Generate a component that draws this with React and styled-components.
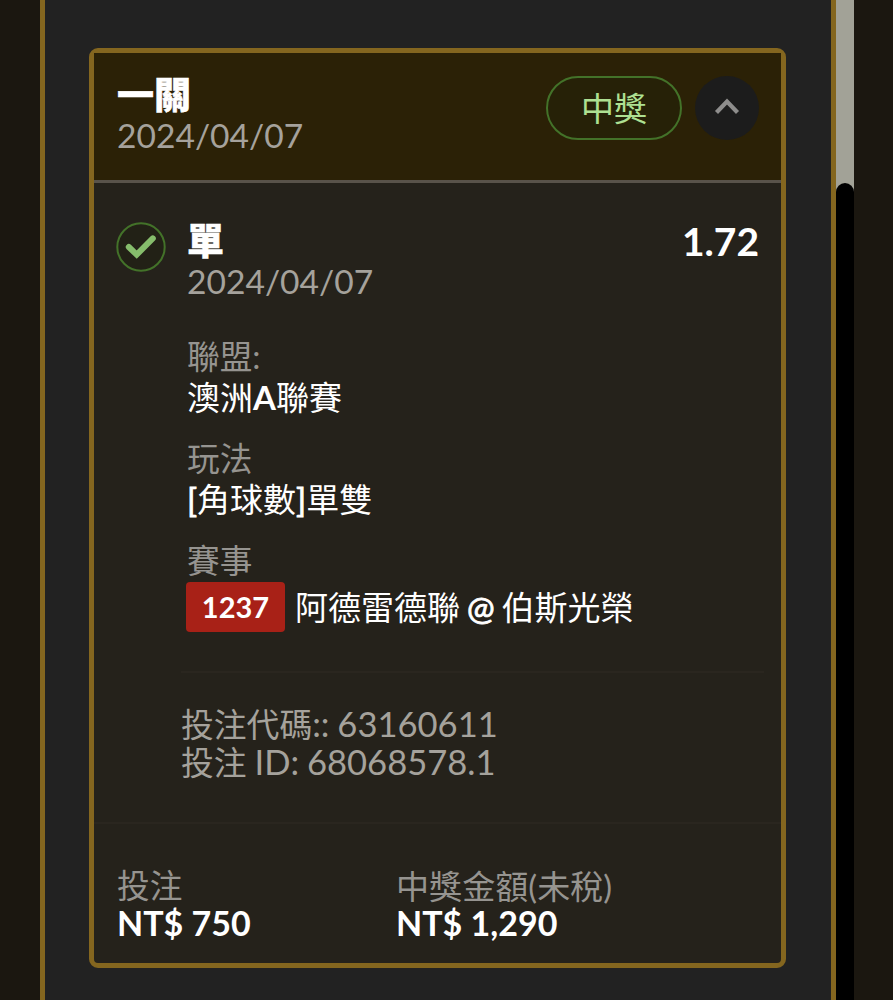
import React from 'react';
import styled, { createGlobalStyle } from 'styled-components';

const COLORS = {
  page: '#1b1710',
  sheet: '#222222',
  card: '#25221b',
  header: '#2b2106',
  gold: '#84661f',
  muted: '#a5a29c',
  label: '#969490',
  text: '#ffffff',
  green: '#437229',
  red: '#a82117',
};

const GlobalStyle = createGlobalStyle`
  * {
    box-sizing: border-box;
  }

  body {
    margin: 0;
    background: ${COLORS.page};
    font-family: Lato, 'Noto Sans CJK TC', sans-serif;
    overflow: hidden;
  }
`;

const Page = styled.div`
  display: flex;
  width: 893px;
  height: 1000px;
  padding-left: 40px;
  background: ${COLORS.page};
`;

const Sheet = styled.main`
  width: 796px;
  height: 1000px;
  padding: 48px 45px 0;
  border: solid ${COLORS.gold};
  border-width: 0 5px;
  background: ${COLORS.sheet};
`;

const ScrollTrack = styled.div`
  width: 18px;
  height: 1000px;
  padding-top: 183px;
  background: linear-gradient(#a2a297 192px, #000 192px);
`;

const ScrollThumb = styled.div`
  height: 817px;
  border-radius: 9px 9px 0 0;
  background: #000;
`;

const Card = styled.article`
  width: 697px;
  height: 920px;
  margin-left: -1px;
  border: 5px solid ${COLORS.gold};
  border-radius: 9px;
  background: ${COLORS.card};
`;

const CardHeader = styled.header`
  display: flex;
  height: 130px;
  padding: 23px 22px 0 23px;
  border-bottom: 3px solid #59534a;
  background: ${COLORS.header};
`;

const Heading = styled.div`
  flex: 1;
`;

const Title = styled.h2`
  margin: 0;
  height: 39px;
  line-height: 37px;
  font-size: 37px;
  font-weight: 900;
  -webkit-text-stroke: 0.5px ${COLORS.text};
  color: ${COLORS.text};
`;

const DateText = styled.p`
  margin: 0;
  height: 41px;
  line-height: 41px;
  font-size: 33.6px;
  color: ${COLORS.muted};
`;

const Status = styled.div`
  width: 136px;
  height: 64px;
  border: 2px solid ${COLORS.green};
  border-radius: 32px;
  line-height: 60px;
  text-align: center;
  font-size: 33px;
  color: #aee092;
  background: #262107;
`;

const Toggle = styled.button`
  display: flex;
  width: 64px;
  height: 64px;
  margin-left: 13px;
  padding: 0;
  border: 0;
  border-radius: 50%;
  background: #1c1c1c;
`;

const Bet = styled.section`
  display: flex;
  height: 641px;
  padding: 39px 22px 0;
  border-bottom: 2px solid #2a261f;
`;

const BetBody = styled.div`
  flex: 1;
  margin-left: 21px;
`;

const BetTop = styled.div`
  display: flex;
  justify-content: space-between;
  margin-bottom: 34px;
`;

const Odds = styled.div`
  line-height: 39px;
  font-size: 39px;
  font-weight: 700;
  color: ${COLORS.text};
`;

const Field = styled.div`
  height: 102px;
`;

const Label = styled.div`
  height: ${p => p.height || 41}px;
  line-height: ${p => p.height || 41}px;
  font-size: ${p => p.size || 32.7}px;
  color: ${COLORS.label};
`;

const Value = styled.div`
  height: 41px;
  line-height: 41px;
  white-space: pre;
  font-size: 33px;
  color: ${COLORS.text};
`;

const Strong = styled.span`
  font-weight: 700;
`;

const Bracket = styled.span`
  -webkit-text-stroke: 0.8px ${COLORS.text};
`;

const At = styled(Bracket)`
  margin: 0 -1.5px;
`;

const Match = styled(Value)`
  display: flex;
  align-items: center;
  height: 50px;
  margin-top: 1px;
  line-height: 50px;
`;

const Tag = styled.span`
  width: 99px;
  height: 50px;
  margin: 0 10px 0 -1px;
  border-radius: 4px;
  text-align: center;
  font-size: 29px;
  font-weight: 700;
  background: ${COLORS.red};
`;

const Codes = styled.div`
  margin: 39px -5px 0 -6px;
  padding-top: 32px;
  border-top: 2px solid #2a261f;
`;

const Code = styled.div`
  height: 38px;
  line-height: 38px;
  white-space: pre;
  font-size: 34.6px;
  word-spacing: -1px;
  color: ${COLORS.muted};
`;

const CodeName = styled.span`
  font-size: 32.8px;
`;

const Footer = styled.footer`
  display: flex;
  padding: 43px 22px 0 23px;
`;

const Total = styled.div`
  width: 279px;
`;

const Amount = styled.div`
  height: 38px;
  line-height: 36px;
  font-size: 34px;
  font-weight: 700;
  color: ${COLORS.text};
`;

const ChevronUp = () => (
  <svg width="64" height="64" viewBox="0 0 64 64" fill="none">
    <path d="M21.5 36.5 32 25.5 42.5 36.5" stroke="#8e8d8c" strokeWidth="4.2" />
  </svg>
);

const CheckMark = () => (
  <svg width="50" height="50" viewBox="0 0 50 50" fill="none">
    <circle cx="25" cy="25" r="23.7" fill="#222116" stroke={COLORS.green} strokeWidth="2" />
    <path
      d="M12.8 25 20.7 32.6 36.8 16.4"
      stroke="#86bd6c"
      strokeWidth="6"
      strokeLinecap="round"
    />
  </svg>
);

const App = () => (
  <>
    <GlobalStyle />
    <Page>
      <Sheet>
        <Card>
          <CardHeader>
            <Heading>
              <Title>一關</Title>
              <DateText>2024/04/07</DateText>
            </Heading>
            <Status>中獎</Status>
            <Toggle>
              <ChevronUp />
            </Toggle>
          </CardHeader>
          <Bet>
            <CheckMark />
            <BetBody>
              <BetTop>
                <Heading>
                  <Title>單</Title>
                  <DateText>2024/04/07</DateText>
                </Heading>
                <Odds>1.72</Odds>
              </BetTop>
              <Field>
                <Label>聯盟:</Label>
                <Value>
                  澳洲<Strong>A</Strong>聯賽
                </Value>
              </Field>
              <Field>
                <Label>玩法</Label>
                <Value>
                  <Bracket>[</Bracket>角球數<Bracket>]</Bracket>單雙
                </Value>
              </Field>
              <Label>賽事</Label>
              <Match>
                <Tag>1237</Tag>阿德雷德聯<At> @ </At>伯斯光榮
              </Match>
              <Codes>
                <Code>
                  <CodeName>投注代碼</CodeName>:: 63160611
                </Code>
                <Code>
                  <CodeName>投注</CodeName> ID: 68068578.1
                </Code>
              </Codes>
            </BetBody>
          </Bet>
          <Footer>
            <Total>
              <Label height={38}>投注</Label>
              <Amount>NT$ 750</Amount>
            </Total>
            <Total>
              <Label height={38} size={33.1}>
                中獎金額(未稅)
              </Label>
              <Amount>NT$ 1,290</Amount>
            </Total>
          </Footer>
        </Card>
      </Sheet>
      <ScrollTrack>
        <ScrollThumb />
      </ScrollTrack>
    </Page>
  </>
);

export default App;
